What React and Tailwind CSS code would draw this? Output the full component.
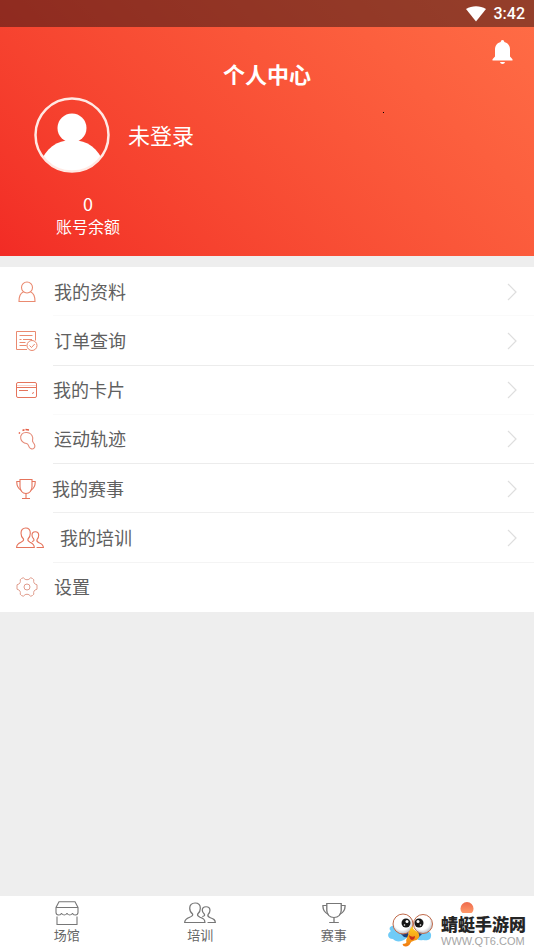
import React from "react";

const UserIcon = () => (
  <svg width="22" height="24" viewBox="0 0 22 24" fill="none" stroke="#ea8a70" strokeWidth="1.1">
    <circle cx="11" cy="7.500" r="5.500" />
    <path d="M7.500 12C4.500 13 3 15.500 3 21.500h16c0-6-1.500-8.500-4.500-9.500" />
  </svg>
);

const OrderIcon = () => (
  <svg width="22" height="24" viewBox="0 0 22 24" fill="none" stroke="#ea8a70" strokeWidth="1">
    <path d="M11 20.500H.5v-18h19v9M3.500 6.500h13M3.500 10.500h2M7 10.500h9M3.500 13.500h6M3.500 16.500h7" />
    <circle cx="16" cy="16.500" r="5" />
    <path d="M13.500 16.500l2 2 3.200-3.500" />
  </svg>
);

const CardIcon = () => (
  <svg width="21" height="24" viewBox="0 0 21 24" fill="none" stroke="#e5745c" strokeWidth="1">
    <rect x="0.500" y="4.500" width="20" height="15" rx="1.500" />
    <path d="M.5 9.500h20M3 12.500h9M17.500 14l-1 2" />
    <path d="M.5 7.500h20" strokeOpacity="0.3" />
  </svg>
);

const TrackIcon = () => (
  <svg width="22" height="24" viewBox="0 0 22 24" fill="none" stroke="#e58b78" strokeWidth="1.100">
    <path d="M11 5.500C6.500 5 3.800 8 4.800 11.800c.8 3 3 4.200 5.700 4.700 2 .6 1.700 2 2.800 3.700 1.200 1.900 3.400 2.300 4.700 1 1.500-1.600.7-3.900-.8-5.700-1.500-1.700-.2-3-.5-5-.7-3-2.900-4.700-5.700-5z" />
    <path d="M2.800 6.500l1.200-1M6.500 3.500l2-.7M9.500 2.600l3.500.4" stroke="#e45b43" strokeWidth="1.500" />
  </svg>
);

const TrophyIcon = ({ size = 20, color = "#e5745c" }) => (
  <svg width={size} height="24" viewBox="0 0 20 24" preserveAspectRatio="none" fill="none" stroke={color} strokeWidth="1.100">
    <path d="M4 2.500h12v7c0 4-2.300 7-6 7s-6-3-6-7z" />
    <path d="M4 4.500H.8c-.2 4 1.200 7 4.700 9M16 4.500h3.200c.2 4-1.200 7-4.700 9M10 16.500v5M6 21.500h8" />
  </svg>
);

const PeopleIcon = ({ width = 28, color = "#e5745c" }) => (
  <svg width={width} height="24" viewBox="0 0 28 24" preserveAspectRatio="none" fill="none" stroke={color} strokeWidth="1.100">
    <path d="M7.500 13C5.800 11.500 5 9.500 5 7.200 5 4 6.800 2 9.700 2s4.600 2 4.600 5.200c0 2.300-.8 4.300-2.300 5.800-.6 1.600.3 2.400 2 3.200 3.200 1.400 4.300 2.300 4.300 5.300H.6c0-3 1.200-4 4.400-5.300 2-.8 3-1.600 2.500-3.200z" />
    <path d="M16 15.500c2-.5 2.500-1.200 1.700-2.500-1.200-1.200-1.700-2.300-1.700-3.800 0-2.200 1.200-3.500 3.300-3.500s3.400 1.300 3.400 3.500c0 1.800-.6 3.300-1.700 4.500-.5 1.500.2 2.300 2 3 3 1.200 4.300 2 4.400 4.800h-6.800" />
  </svg>
);

const GearIcon = () => (
  <svg width="22" height="24" viewBox="0 0 22 24" fill="none" stroke="#e09c8c" strokeWidth="1">
    <path d="M5.500 3.500l2-.8c1 1.600 2 2 3.500 2s2.500-.4 3.500-2l2 .8 1.300 1.300c-.6 2.200.2 4.400 3.200 5v4.400c-3 .6-3.800 2.800-3.200 5l-1.300 1.300-2 .8c-1-1.600-2-2-3.500-2s-2.500.4-3.500 2l-2-.8-1.300-1.300c.6-2.200-.2-4.400-3.200-5V9.800c3-.6 3.800-2.800 3.200-5z" />
    <circle cx="11" cy="12" r="3" />
  </svg>
);

const ShopIcon = () => (
  <svg width="24" height="24" viewBox="0 0 24 24" fill="none" stroke="#777" strokeWidth="1.100">
    <path d="M4 .8h16l3 5.700v5c-.2 3.300-5 3.300-5.500.5-.6 2.600-4.900 2.600-5.500 0-.6 2.600-4.900 2.600-5.500 0-.5 2.800-5.300 2.800-5.500-.5v-5zM1 6.500h22M2 15.500v8h20v-8" />
  </svg>
);

const Chevron = () => (
  <svg className="ml-auto" width="10" height="18" viewBox="0 0 10 18" fill="none" stroke="#dedede" strokeWidth="1.200">
    <path d="M1 1l8 8-8 8" />
  </svg>
);

const Mascot = () => (
  <svg width="46" height="36" viewBox="0 0 46 36">
    <defs>
      <radialGradient id="eye" cx="45%" cy="40%" r="60%">
        <stop offset="65%" stopColor="#fff" />
        <stop offset="100%" stopColor="#b9bcc4" />
      </radialGradient>
      <linearGradient id="beak" x1="0" y1="0" x2="0" y2="1">
        <stop offset="0%" stopColor="#ffd21f" />
        <stop offset="100%" stopColor="#f07a12" />
      </linearGradient>
    </defs>
    <path d="M8 13C3 12 1 16 4 18c-5 3-3 8 2 8 3 4 12 3 15-3zM33 18c6-1 12 0 11 5 0 4-4 5-8 4-4 1-8-1-10-5z" fill="#6fcbf7" />
    <path d="M13 20l4 4 6 1-2-6zM30 19l5 2-4 4-4-1z" fill="#1d3f7a" />
    <circle cx="16" cy="11" r="10" fill="url(#eye)" stroke="#c06a4a" strokeWidth="1" />
    <circle cx="36" cy="11" r="9.500" fill="url(#eye)" stroke="#c06a4a" strokeWidth="1" />
    <path d="M25.500 13c0 3 2 4 5 6 3 3 2 6-1 8-3 1-5 1-6 3-1 3-4 4-7 3l-1-2c2 0 4-1 4-2-1-2 1-5 2-8 1-4 2-6 4-8z" fill="url(#beak)" />
    <path d="M22 22c2 2 4 2 6 1 0 3-2 4-3 4s-3-2-3-5z" fill="#c9301a" />
    <circle cx="19" cy="10" r="4.500" fill="#161616" />
    <circle cx="32" cy="10" r="4.500" fill="#161616" />
    <circle cx="20" cy="8.500" r="1.500" fill="#fff" />
    <circle cx="31" cy="8.500" r="1.500" fill="#fff" />
    <circle cx="17.500" cy="12" r="0.800" fill="#fff" />
    <circle cx="33.500" cy="12" r="0.800" fill="#fff" />
  </svg>
);

const menu = [
  { label: "我的资料", icon: <UserIcon />, line: "border-[#fafafa]" },
  { label: "订单查询", icon: <OrderIcon />, line: "border-[#ececec]" },
  { label: "我的卡片", icon: <CardIcon />, line: "border-[#fafafa]" },
  { label: "运动轨迹", icon: <TrackIcon />, line: "border-[#ececec]" },
  { label: "我的赛事", icon: <TrophyIcon />, line: "border-[#efefef]" },
  { label: "我的培训", icon: <PeopleIcon />, line: "border-[#f4f4f4]" },
  { label: "设置", icon: <GearIcon />, noArrow: true },
];

const tabs = [
  { label: "场馆", icon: <ShopIcon /> },
  { label: "培训", icon: <PeopleIcon width={32} color="#777" /> },
  { label: "赛事", icon: <TrophyIcon size={24} color="#777" /> },
];

const Header = () => (
  <header className="relative bg-linear-45 from-[#f22b25] to-[#ff6d46] text-white">
    <div className="flex h-[27px] items-center justify-end gap-2 bg-[#2a1210]/50 pr-[9px]">
      <svg width="20" height="16" viewBox="0 0 20 16" fill="#fff">
        <path d="M0 3C6-.8 14-.8 20 3L10 15.500z" />
      </svg>
      <span className="font-[Roboto] text-base font-medium">3:42</span>
    </div>
    <button className="absolute top-[39px] right-[21px]" aria-label="bell">
      <svg width="21" height="26" viewBox="0 0 21 26" fill="#fff">
        <path d="M10.500 1c1 0 1.800.8 1.800 2 3.700.9 5.700 3.800 5.700 7.500v7l2.500 2.700V21.500H.5v-1.300L3 17.500v-7C3 6.800 5 3.900 8.700 3c0-1.200.8-2 1.800-2zM8 23h5c-.3 1.300-1.200 2-2.500 2S8.300 24.300 8 23z" />
      </svg>
    </button>
    <i className="absolute top-28 left-[383px] size-px bg-black" />
    <h1 className="pt-[30px] text-center text-[22px] leading-8 font-bold">个人中心</h1>
    <div className="flex items-center gap-[18px] pt-2 pl-[34px]">
      <svg width="76" height="76" viewBox="0 0 76 76">
        <clipPath id="face">
          <circle cx="38" cy="38" r="37" />
        </clipPath>
        <g fill="#fff" clipPath="url(#face)">
          <circle cx="38" cy="31" r="14.500" />
          <path d="M6 66C12 52 22 43 38 43s26 9 32 23v10H6z" />
        </g>
        <circle cx="38" cy="38" r="36.500" fill="none" stroke="#ffe9e4" strokeWidth="2.500" />
      </svg>
      <span className="pb-[2px] text-[22px] leading-8">未登录</span>
    </div>
    <div className="ml-14 w-16 pt-[18px] pb-[19px] text-center">
      <p className="text-lg leading-6">0</p>
      <p className="text-base leading-[22px]">账号余额</p>
    </div>
  </header>
);

const App = () => {
  return (
    <div className="relative flex min-h-screen flex-col bg-[#eeeeee] font-['Noto_Sans_CJK_SC',sans-serif]">
      <Header />

      <ul className="mt-[11px] grid h-[345px] auto-rows-fr bg-white text-lg text-[#606060]">
        {menu.map((item) => (
          <li key={item.label} className="relative">
            <button className="flex h-full w-full items-center pr-[17px] pl-4">
              {item.icon}
              <span className="ml-4 pb-[2px]">{item.label}</span>
              {!item.noArrow && <Chevron />}
            </button>
            {item.line && <span className={`absolute right-0 bottom-0 left-[53px] border-b ${item.line}`} />}
          </li>
        ))}
      </ul>

      <nav className="mt-auto grid h-[53px] grid-cols-4 bg-white text-[13px] leading-5 text-[#666]">
        {tabs.map((tab) => (
          <button key={tab.label} className="flex flex-col items-center pt-[5px]">
            {tab.icon}
            <span>{tab.label}</span>
          </button>
        ))}
        <button className="flex flex-col items-center pt-[5px]" aria-label="user">
          <svg width="14" height="14" viewBox="0 0 14 14">
            <linearGradient id="head" x1="0" y1="0" x2="0" y2="1">
              <stop offset="0%" stopColor="#ee6a4c" />
              <stop offset="100%" stopColor="#ff9a6a" />
            </linearGradient>
            <path d="M0.500 7.500a6.500 6.500 0 0 1 13 0c0 2-.8 3.600-2 4.500h-9C1.300 11.100.5 9.500.5 7.500z" fill="url(#head)" />
          </svg>
        </button>
      </nav>

      {/* site mark over the last tab */}
      <div className="absolute right-2 bottom-0 flex items-end gap-2">
        <Mascot />
        <div>
          <p className="text-[17px] leading-[18px] font-black text-[#252525]">蜻蜓手游网</p>
          <p className="font-['Liberation_Sans'] text-[11px] leading-4 text-[#a5a5a5]">WWW.QT6.COM</p>
        </div>
      </div>
    </div>
  );
};

export default App;
